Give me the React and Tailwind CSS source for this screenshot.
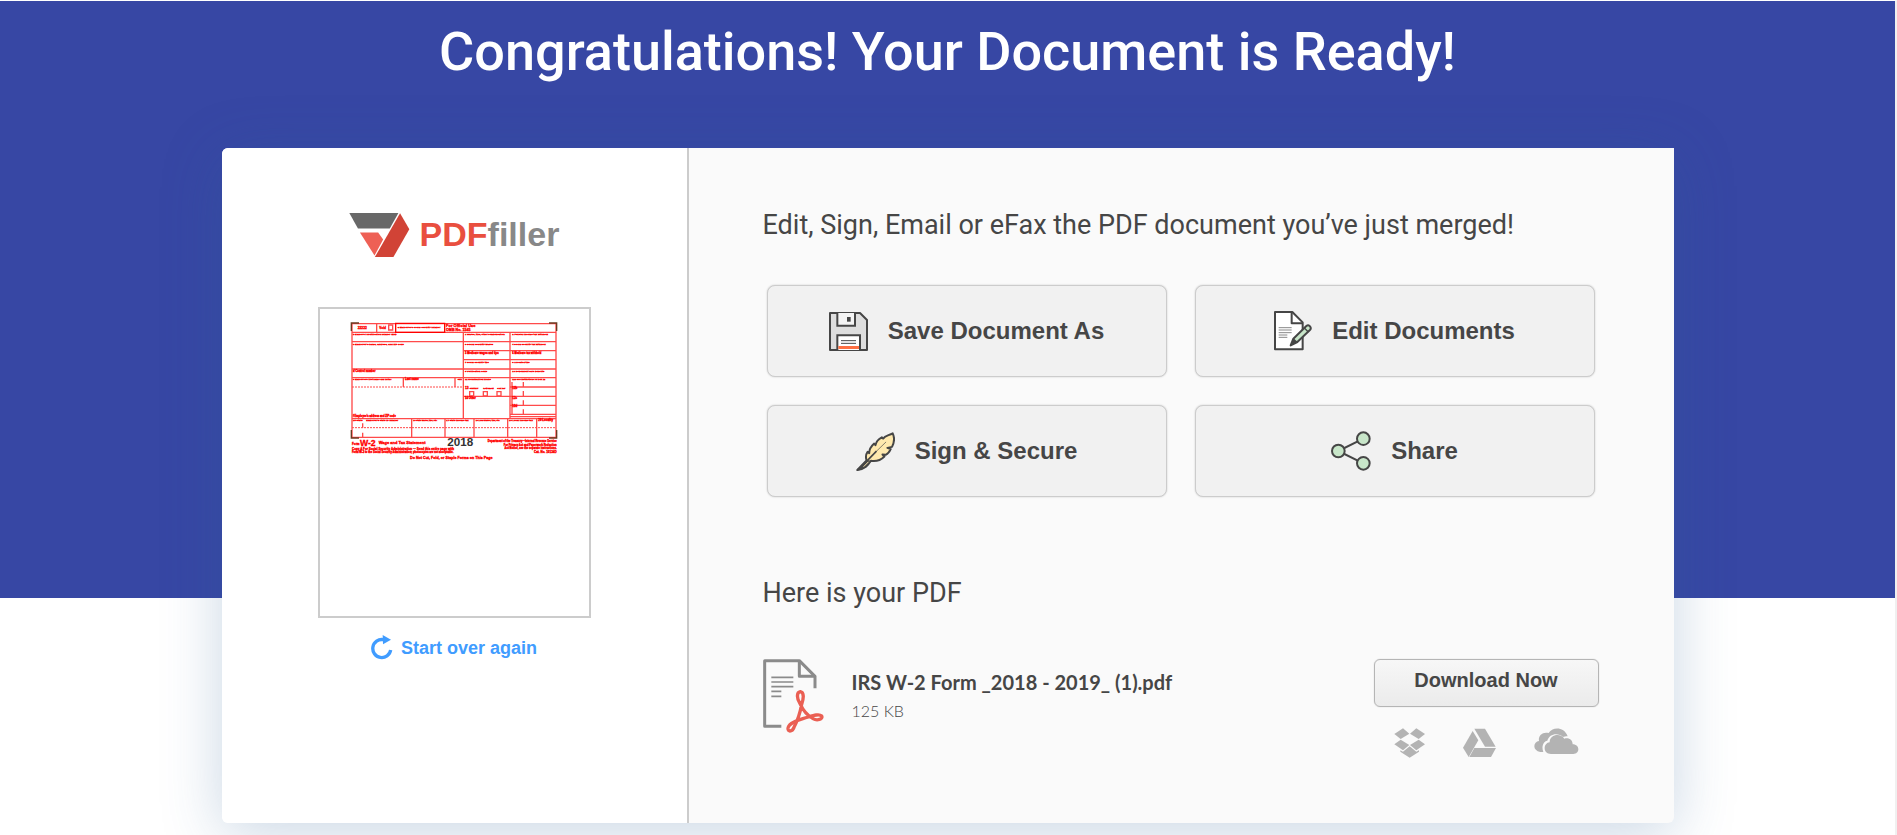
import React from "react";

function LogoMark() {
  return (
    <svg className="w-[61px] h-[46px]" viewBox="53 35 184 137" aria-hidden="true">
      <path d="M54 37H202L176 84H80Z" fill="#686868" />
      <path d="M86 96H141L156 117L130 165Z" fill="#ee6055" />
      <path d="M207 38L235 86L187 170H131Z" fill="#d14336" />
    </svg>
  );
}

function SaveIcon() {
  return (
    <svg className="w-[39px] h-[39px]" viewBox="237 366 117 117" fill="none" stroke="#464646" strokeWidth="6" aria-hidden="true">
      <path d="M240 369H330L351 390V480H240Z" fill="#dedede" strokeLinejoin="round" />
      <path d="M262 369V407H315V369" fill="#f4f4f4" />
      <path d="M262 480V436H330V480" fill="#fff" />
      <path d="M291 381H302V395H291Z" fill="#464646" stroke="none" />
      <path d="M265 468H327V477H265Z" fill="#ff7043" stroke="none" />
      <path d="M273 452H318M273 460H318" strokeWidth="3" />
    </svg>
  );
}

function EditIcon() {
  return (
    <svg className="w-[38px] h-[40px]" viewBox="283 123 114 120" fill="none" stroke="#464646" strokeWidth="6" strokeLinejoin="round" aria-hidden="true">
      <path d="M286 126H338L369 157V238H286Z" fill="#fff" />
      <path d="M336 127V160H369" />
      <path d="M297 173H336M297 180H336M297 188H336M297 195H323M297 202H323" stroke="#8a8a8a" strokeWidth="3" />
      <path d="M333 226L341 206L380 168Q386 163 391 169Q396 175 390 181L353 216Z" fill="#c8e6c9" />
      <path d="M332 227L342 205L354 216Z" fill="#464646" stroke="none" />
      <path d="M374 174L386 186" strokeWidth="4" />
    </svg>
  );
}

function FeatherIcon() {
  return (
    <svg className="w-[39px] h-[39px]" viewBox="320 722 118 118" fill="none" stroke="#464646" strokeWidth="6" strokeLinejoin="round" aria-hidden="true">
      <path
        d="M352 808C349 799 350 789 355 782L360 786C360 775 366 765 375 757L379 762C381 749 390 742 398 738L402 742C408 733 418 733 431 726C437 738 435 755 429 767L415 770L425 774C421 783 417 788 410 791L400 790L406 796C396 806 381 812 365 809C357 821 350 834 324 837Z"
        fill="#ffe9ae"
      />
      <path d="M321 839L352 806L365 809C357 824 345 836 321 839Z" fill="#464646" stroke="none" />
      <path d="M346 817L382 780" strokeWidth="5" />
      <path d="M380 782L411 752" strokeWidth="2" />
      <path d="M343 827L358 812" stroke="#ffe9ae" strokeWidth="3" />
    </svg>
  );
}

function ShareIcon() {
  return (
    <svg className="w-[40px] h-[40px]" viewBox="453 482 120 120" fill="#c8e6c9" stroke="#464646" strokeWidth="6" aria-hidden="true">
      <path d="M475 542L550 505M475 542L550 579" />
      <circle cx="475" cy="542" r="19" />
      <circle cx="550" cy="505" r="19" />
      <circle cx="550" cy="579" r="19" />
    </svg>
  );
}

function RestartIcon() {
  return (
    <svg className="w-[22px] h-[25px]" viewBox="182 105 66 75" aria-hidden="true">
      <path d="M219 119A27 27 0 1 0 241 150" fill="none" stroke="#409cff" strokeWidth="10" />
      <path d="M217 105L242 119L218 133Z" fill="#409cff" />
    </svg>
  );
}

function PdfIcon() {
  return (
    <svg className="w-[61px] h-[74px] shrink-0" viewBox="38 266 183 222" fill="none" aria-hidden="true">
      <g stroke="#8b8b8b" strokeWidth="9" strokeLinejoin="round">
        <path d="M93 468H43V271H147L194 318V354" />
        <path d="M147 271V318H194" />
      </g>
      <path d="M63 321H129M63 335H129M63 349H129M63 363H93M63 378H93" stroke="#8b8b8b" strokeWidth="5" />
      <path
        d="M149 400C139 385 138 366 150 364C162 366 160 385 154 402C150 425 142 450 131 471C126 484 115 485 113 476C112 463 135 451 160 444C180 439 205 428 214 437C219 447 200 452 188 445C172 436 157 418 149 400Z"
        stroke="#ea5f53"
        strokeWidth="10"
      />
    </svg>
  );
}

function DropboxIcon() {
  return (
    <svg className="w-[31px] h-[30px]" viewBox="134 264 93 90" fill="#b3b3b3" aria-hidden="true">
      <path d="M135 282L161 265L180 281L154 297Z" />
      <path d="M227 282L201 265L182 281L208 297Z" />
      <path d="M135 313L154 299L180 315L161 331Z" />
      <path d="M227 313L208 299L182 315L201 331Z" />
      <path d="M153 331L161 335L181 319L201 335L209 331V335L181 353L153 335Z" />
    </svg>
  );
}

function DriveIcon() {
  return (
    <svg className="w-[33px] h-[30px]" viewBox="339 264 99 90" fill="#b3b3b3" aria-hidden="true">
      <path d="M373 266H405L437 320H405Z" />
      <path d="M368 273L385 301L356 351L339 323Z" />
      <path d="M373 324H438L423 351H358Z" />
    </svg>
  );
}

function OneDriveIcon() {
  return (
    <svg className="w-[45px] h-[30px]" viewBox="551 264 135 90" fill="#b3b3b3" aria-hidden="true">
      <path d="M579 336H570C558 334 552 327 552 319C552 310 558 304 566 303C563 288 576 274 595 279C604 262 640 257 652 289C646 289 641 290 638 291C624 277 597 280 591 302C578 304 573 322 579 336Z" />
      <path d="M602 342C590 342 583 335 583 325C583 315 589 308 598 307C597 284 630 277 642 296C657 292 667 301 667 313C678 313 684 320 684 328C684 336 678 342 669 342Z" />
    </svg>
  );
}

const labels = [
  [148, 84, "22222", 40],
  [213, 84, "Void", 20],
  [268, 80, "a Employee's social security number", 135],
  [134, 102, "b Employer identification number (EIN)", 142],
  [134, 132, "c Employer's name, address, and ZIP code", 160],
  [134, 212, "d Control number", 68],
  [134, 238, "e Employee's first name and initial", 130],
  [290, 238, "Last name", 40],
  [448, 238, "Suff.", 16],
  [134, 348, "f Employee's address and ZIP code", 134],
  [470, 102, "1 Wages, tips, other compensation", 126],
  [612, 102, "2 Federal income tax withheld", 116],
  [470, 132, "3 Social security wages", 92],
  [612, 132, "4 Social security tax withheld", 114],
  [470, 159, "5 Medicare wages and tips", 106],
  [612, 159, "6 Medicare tax withheld", 94],
  [470, 186, "7 Social security tips", 84],
  [612, 186, "8 Allocated tips", 60],
  [470, 212, "9 Verification code", 76],
  [612, 212, "10 Dependent care benefits", 102],
  [470, 238, "11 Nonqualified plans", 84],
  [612, 238, "12a See instructions for box 12", 110],
  [470, 265, "13", 12],
  [612, 265, "12b", 14],
  [470, 293, "14 Other", 34],
  [612, 293, "12c", 14],
  [612, 319, "12d", 14],
  [134, 360, "15 State", 32],
  [174, 360, "Employer's state ID number", 100],
  [315, 360, "16 State wages, tips, etc.", 84],
  [414, 360, "17 State income tax", 72],
  [502, 360, "18 Local wages, tips, etc.", 84],
  [602, 360, "19 Local income tax", 76],
  [690, 360, "20 Locality", 50],
];

function FormPreview() {
  return (
    <svg
      className="w-[208px] h-[140px]"
      viewBox="125 60 624 420"
      fill="none"
      stroke="#ff4a4a"
      fontFamily="'Liberation Sans', Arial, sans-serif"
      role="img"
      aria-label="W-2 form preview"
    >
      <g strokeWidth="4">
        <path d="M131 68H743V409H131Z" />
        <path d="M131 94H743M131 122H743M465 149H743M465 176H743M131 204H743M131 230H743M131 353H743" />
        <path d="M605 258H743M465 286H743M605 313H743M605 340H743M605 347H743" />
        <path d="M465 94V353M605 94V353M285 230V258M440 230V258M205 68V94" />
        <path d="M310 353V409M410 353V409M497 353V409M598 353V409M685 353V409" />
        <path d="M241 72H253V87H241ZM484 272H496V285H484ZM525 272H537V285H525ZM566 272H578V285H566Z" />
        <path d="M645 243V258M645 270V285M645 298V312M645 325V339M163 367V380M163 395V408M611 243V339" />
        <path d="M131 258H465M131 380H743" strokeDasharray="6 3" strokeWidth="3" />
      </g>
      <path d="M262 67H409V94H262Z" stroke="#ff0000" strokeWidth="4" />
      <path d="M129 90V66H152M722 66H745V90M129 387V411H152M722 411H745V387" stroke="#6b3a20" strokeWidth="4" />
      <g fill="#ff0000" stroke="#ff0000" strokeWidth="1" fontSize="9" fontWeight="700">
        {labels.map(([x, y, text, width]) => (
          <text key={text} x={x} y={y} fontSize={Math.min(10, (width / text.length) * 1.9)}>
            {text}
          </text>
        ))}
        <text x="484" y="265" fontSize="6">Statutory</text>
        <text x="525" y="265" fontSize="6">Retirement</text>
        <text x="567" y="265" fontSize="6">Sick pay</text>
        <text x="413" y="79" fontSize="12">For Official Use</text>
        <text x="413" y="89" fontSize="11">OMB No. 1545</text>
        <text x="131" y="433" fontSize="9">Form</text>
        <text x="155" y="434" fontSize="26">W-2</text>
        <text x="211" y="430" fontSize="12">Wage and Tax Statement</text>
        <text x="417" y="434" fontSize="35" fill="#333" stroke="none">2018</text>
        <text x="745" y="422" fontSize="8" textAnchor="end">Department of the Treasury—Internal Revenue Service</text>
        <text x="745" y="435" fontSize="8" textAnchor="end">For Privacy Act and Paperwork Reduction</text>
        <text x="745" y="444" fontSize="8" textAnchor="end">Act Notice, see the separate instructions.</text>
        <text x="745" y="457" fontSize="9" textAnchor="end">Cat. No. 10134D</text>
        <text x="131" y="448" fontSize="9">Copy A For Social Security Administration — Send this entire page with</text>
        <text x="131" y="457" fontSize="8">Form W-3 to the Social Security Administration; photocopies are not acceptable.</text>
        <text x="305" y="475" fontSize="11">Do Not Cut, Fold, or Staple Forms on This Page</text>
      </g>
    </svg>
  );
}

const actions = [
  { label: "Save Document As", Icon: SaveIcon },
  { label: "Edit Documents", Icon: EditIcon },
  { label: "Sign & Secure", Icon: FeatherIcon },
  { label: "Share", Icon: ShareIcon },
];

export default function App() {
  return (
    <div className="min-h-screen bg-white border-t border-t-white border-r-2 border-r-[#f0f0f0] pb-3 overflow-hidden text-[#464646] font-['Liberation_Sans',Arial,sans-serif]">
      <header className="h-[597px] bg-[#3747a4] pt-[19px] text-center">
        <h1 className="font-['Roboto',sans-serif] text-[54px] leading-[64px] font-medium text-white">
          Congratulations! Your Document is Ready!
        </h1>
      </header>

      <main className="-mt-[450px] mx-auto w-full max-w-[1452px] flex rounded-md rounded-tr-none bg-[#fafafa] shadow-[0_10px_60px_rgba(48,98,150,0.26)]">
        <aside className="w-[467px] shrink-0 flex flex-col items-center border-r-2 border-[#ccc] bg-white rounded-l-md pt-16">
          <div className="flex items-center gap-[10px]">
            <LogoMark />
            <div className="pb-[2px] text-[34px] leading-[44px] font-bold text-[#888]">
              <span className="text-[#e94f3f]">PDF</span>filler
            </div>
          </div>
          <div className="mt-[49px] w-[273px] h-[311px] border-2 border-[#ccc] pt-3 flex justify-center items-start">
            <FormPreview />
          </div>
          <a href="#" className="mt-[17px] flex items-center gap-2 text-lg leading-6 font-bold text-[#409cff]">
            <RestartIcon />
            Start over again
          </a>
        </aside>

        <section className="flex-1 pt-[61px] pl-[74px] pr-[75px] pb-[65px]">
          <h2 className="font-['Roboto',sans-serif] text-[27px] leading-8 font-normal">
            Edit, Sign, Email or eFax the PDF document you’ve just merged!
          </h2>
          <div className="mt-11 px-1 grid grid-cols-2 gap-7">
            {actions.map(({ label, Icon }) => (
              <button
                key={label}
                className="h-[92px] flex items-center justify-center gap-5 rounded-lg border border-[#ccc] bg-[#f1f1f1] text-2xl font-bold shadow-[0_0_2px_rgba(0,0,0,0.2)]"
              >
                <Icon />
                {label}
              </button>
            ))}
          </div>

          <h2 className="mt-20 font-['Roboto',sans-serif] text-[27px] leading-8 font-normal">Here is your PDF</h2>
          <div className="mt-[50px] flex items-start">
            <PdfIcon />
            <div className="ml-7 pt-2 flex-1 font-['Lato',sans-serif]">
              <div className="text-xl leading-[30px] font-bold">IRS W-2 Form _2018 - 2019_ (1).pdf</div>
              <div className="text-base leading-7 font-light">125 KB</div>
            </div>
            <div className="w-[225px]">
              <button className="w-full h-12 pb-[6px] rounded-md border border-[#b5b5b5] bg-linear-to-b from-[#f7f7f7] to-[#ebebeb] text-xl font-bold shadow-[0_0_1px_#b5b5b5]">
                Download Now
              </button>
              <div className="mt-[21px] px-5 flex justify-between">
                <a href="#" aria-label="Dropbox"><DropboxIcon /></a>
                <a href="#" aria-label="Google Drive"><DriveIcon /></a>
                <a href="#" aria-label="OneDrive"><OneDriveIcon /></a>
              </div>
            </div>
          </div>
        </section>
      </main>
    </div>
  );
}
